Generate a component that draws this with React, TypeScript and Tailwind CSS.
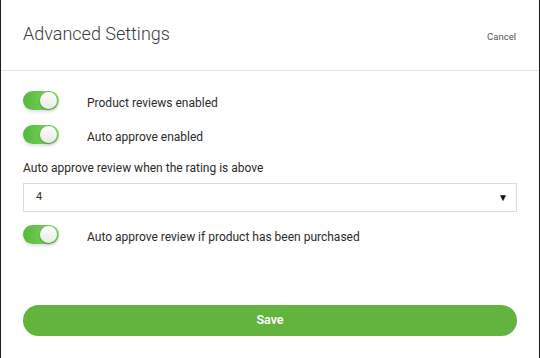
import React from "react";

function Toggle() {
  return (
    <div className="relative h-[19px] w-[36px] shrink-0 rounded-full bg-gradient-to-r from-[#55b83f] to-[#86d960] shadow-[0_2px_3px_rgba(0,0,0,0.12)]">
      <div className="absolute right-[2px] top-[1px] h-[17px] w-[17px] rounded-full bg-gradient-to-b from-white to-[#e9e9e9] shadow-[0_1px_2px_rgba(0,0,0,0.35)]" />
    </div>
  );
}

function ToggleRow({ label }: { label: string }) {
  return (
    <div className="flex h-[19px] items-center">
      <Toggle />
      <span className="relative top-[3px] ml-[28px] text-[12px] leading-[17px] text-[#2b2b2b]">{label}</span>
    </div>
  );
}

export default function App() {
  return (
    <div
      className="flex h-[358px] w-[540px] bg-[#1c1c1c]"
      style={{ fontFamily: 'Roboto, "Liberation Sans", sans-serif' }}
    >
      <div className="mx-[1px] flex flex-1 flex-col bg-white">
        <div className="flex h-[71px] shrink-0 items-center justify-between border-b border-[#e3e3e3] pl-[22px] pr-[23px]">
          <span className="-mt-[3px] text-[18px] font-light text-[#3a3a3a]">
            Advanced Settings
          </span>
          <span className="mt-[5px] text-[9.5px] text-[#555]">Cancel</span>
        </div>
        <div className="flex flex-col px-[22px] pt-[20px]">
          <ToggleRow label="Product reviews enabled" />
          <div className="mt-[15px]">
            <ToggleRow label="Auto approve enabled" />
          </div>
          <div className="mt-[16px] text-[12px] leading-[17px] text-[#2b2b2b]">
            Auto approve review when the rating is above
          </div>
          <div className="mt-[6px] flex h-[29px] shrink-0 items-center justify-between border border-[#dcdcdc] pl-[12px] pr-[8px]">
            <span className="text-[11px] text-[#333]">4</span>
            <span className="text-[10px] text-[#111]">▼</span>
          </div>
          <div className="mt-[13px]">
            <ToggleRow label="Auto approve review if product has been purchased" />
          </div>
          <button className="mt-[61px] flex h-[31px] shrink-0 items-center justify-center rounded-full bg-[#63b33f] text-[12.5px] font-semibold text-white">
            Save
          </button>
        </div>
      </div>
    </div>
  );
}
